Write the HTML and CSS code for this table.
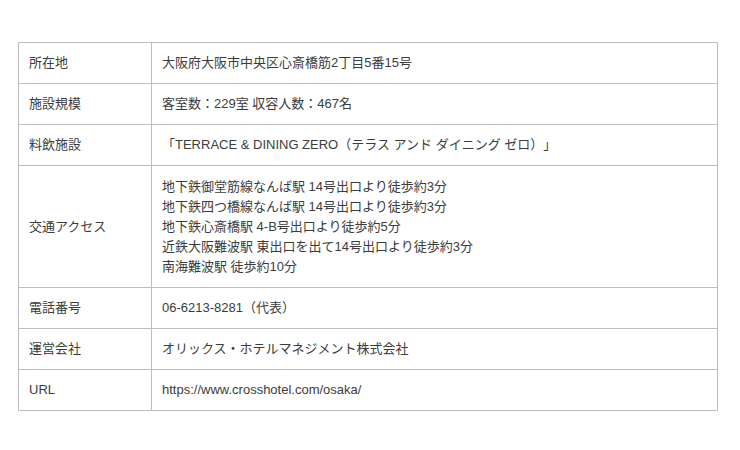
FILE: index.html
```html
<!DOCTYPE html>
<html lang="ja">
<head>
<meta charset="utf-8">
<link rel="stylesheet" href="styles.css">
</head>
<body>
<div class="wrap">
<table class="info">
<tr><th>所在地</th><td>大阪府大阪市中央区心斎橋筋2丁目5番15号</td></tr>
<tr><th>施設規模</th><td>客室数：229室 収容人数：467名</td></tr>
<tr><th>料飲施設</th><td>「TERRACE &amp; DINING ZERO（テラス アンド ダイニング ゼロ）」</td></tr>
<tr><th>交通アクセス</th><td>地下鉄御堂筋線なんば駅 14号出口より徒歩約3分<br>地下鉄四つ橋線なんば駅 14号出口より徒歩約3分<br>地下鉄心斎橋駅 4-B号出口より徒歩約5分<br>近鉄大阪難波駅 東出口を出て14号出口より徒歩約3分<br>南海難波駅 徒歩約10分</td></tr>
<tr><th>電話番号</th><td>06-6213-8281（代表）</td></tr>
<tr><th>運営会社</th><td>オリックス・ホテルマネジメント株式会社</td></tr>
<tr><th>URL</th><td>https://www.crosshotel.com/osaka/</td></tr>
</table>
</div>
</body>
</html>
```
FILE: styles.css
```css
html, body {
  margin: 0;
  background: #fff;
}
.wrap {
  padding: 42px 0 0 18px;
}
.info {
  border-collapse: collapse;
  width: 700px;
  font-family: "Liberation Sans", "Noto Sans CJK JP", sans-serif;
  font-size: 13px;
  line-height: 20px;
  color: #3c3c3c;
  text-spacing-trim: space-all;
}
.info th, .info td {
  border: 1px solid #bdbdbd;
  padding: 10px 10px;
  text-align: left;
  font-weight: normal;
  vertical-align: middle;
}
.info th {
  width: 112px;
}
.info tr:nth-child(4) td {
  padding-top: 11px;
}
```
